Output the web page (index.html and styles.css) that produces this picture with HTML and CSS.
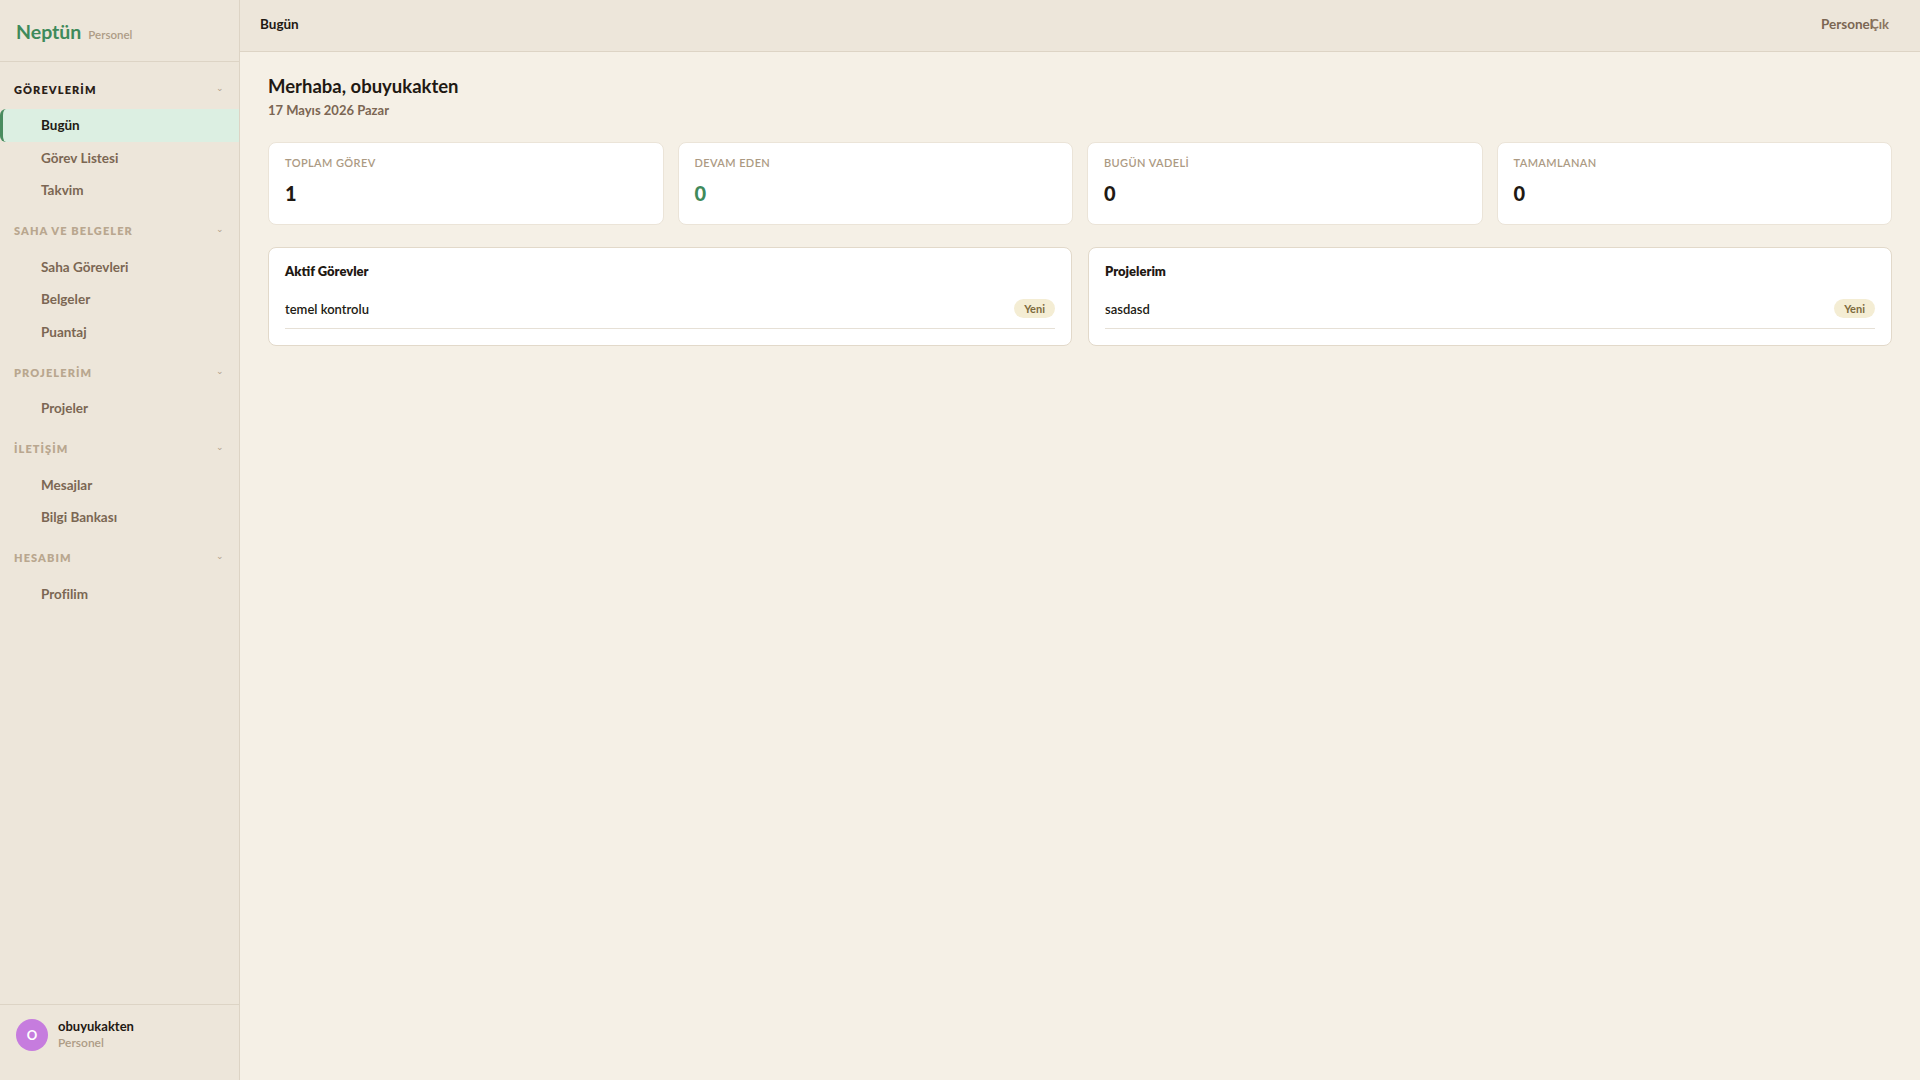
FILE: index.html
```html
<!DOCTYPE html>
<html lang="tr">
<head>
    <meta charset="utf-8">
    <title>Bugün - Neptün</title>
    <link rel="stylesheet" href="styles.css">
</head>
<body>
    <div class="layout">

        <aside class="sidebar">
            <div class="brand">
                <span class="brand-name">Neptün</span>
                <span class="brand-role">Personel</span>
            </div>

            <nav class="nav">
                <div class="nav-section">
                    <div class="nav-head open">GÖREVLERİM <span class="chev">&#8964;</span></div>
                    <a class="nav-item active" href="#">Bugün</a>
                    <a class="nav-item" href="#">Görev Listesi</a>
                    <a class="nav-item" href="#">Takvim</a>
                </div>
                <div class="nav-section">
                    <div class="nav-head">SAHA VE BELGELER <span class="chev">&#8964;</span></div>
                    <a class="nav-item" href="#">Saha Görevleri</a>
                    <a class="nav-item" href="#">Belgeler</a>
                    <a class="nav-item" href="#">Puantaj</a>
                </div>
                <div class="nav-section">
                    <div class="nav-head">PROJELERİM <span class="chev">&#8964;</span></div>
                    <a class="nav-item" href="#">Projeler</a>
                </div>
                <div class="nav-section">
                    <div class="nav-head">İLETİŞİM <span class="chev">&#8964;</span></div>
                    <a class="nav-item" href="#">Mesajlar</a>
                    <a class="nav-item" href="#">Bilgi Bankası</a>
                </div>
                <div class="nav-section">
                    <div class="nav-head">HESABIM <span class="chev">&#8964;</span></div>
                    <a class="nav-item" href="#">Profilim</a>
                </div>
            </nav>

            <div class="user">
                <div class="avatar">O</div>
                <div class="user-info">
                    <div class="user-name">obuyukakten</div>
                    <div class="user-role">Personel</div>
                </div>
            </div>
        </aside>

        <div class="main">
            <header class="topbar">
                <div class="page-title">Bugün</div>
                <div class="topbar-right">
                    <span class="top-role">Personel</span>
                    <button class="logout" type="button">Çık</button>
                </div>
            </header>

            <div class="content">
                <h1 class="greeting">Merhaba, obuyukakten</h1>
                <p class="date">17 Mayıs 2026 Pazar</p>

                <div class="stats">
                    <div class="stat">
                        <div class="stat-label">TOPLAM GÖREV</div>
                        <div class="stat-value">1</div>
                    </div>
                    <div class="stat">
                        <div class="stat-label">DEVAM EDEN</div>
                        <div class="stat-value green">0</div>
                    </div>
                    <div class="stat">
                        <div class="stat-label">BUGÜN VADELİ</div>
                        <div class="stat-value">0</div>
                    </div>
                    <div class="stat">
                        <div class="stat-label">TAMAMLANAN</div>
                        <div class="stat-value">0</div>
                    </div>
                </div>

                <div class="panels">
                    <div class="panel">
                        <h2>Aktif Görevler</h2>
                        <div class="row">
                            <span>temel kontrolu</span>
                            <span class="badge">Yeni</span>
                        </div>
                    </div>
                    <div class="panel">
                        <h2>Projelerim</h2>
                        <div class="row">
                            <span>sasdasd</span>
                            <span class="badge">Yeni</span>
                        </div>
                    </div>
                </div>
            </div>
        </div>

    </div>
</body>
</html>
```

FILE: styles.css
```css
* {
    box-sizing: border-box;
}

body {
    margin: 0;
    font-family: Lato, "Noto Sans", sans-serif;
    font-size: 13px;
    color: #221b14;
    background: #f5f0e6;
}

.layout {
    display: flex;
    height: 100vh;
}

/* sidebar */
.sidebar {
    width: 240px;
    flex-shrink: 0;
    display: flex;
    flex-direction: column;
    background: #ede6da;
    border-right: 1px solid #ddd4c5;
}

.brand {
    height: 62px;
    display: flex;
    align-items: baseline;
    gap: 7px;
    padding: 20px 16px 0;
    border-bottom: 1px solid #ddd4c5;
}

.brand-name {
    font-size: 19.5px;
    font-weight: 700;
    color: #3f8a5b;
}

.brand-role {
    font-size: 11.5px;
    font-weight: 600;
    color: #ad9c86;
}

.nav {
    flex: 1;
    padding-top: 13px;
}

.nav-section {
    margin-bottom: 10px;
}

.nav-head {
    height: 28px;
    display: flex;
    align-items: center;
    justify-content: space-between;
    padding: 0 14px 0 14px;
    margin-bottom: 6px;
    font-size: 11px;
    font-weight: 800;
    letter-spacing: 1.1px;
    color: #b9a78f;
}

.nav-head.open {
    color: #2a2018;
}

.chev {
    font-size: 9px;
    font-weight: 400;
    color: #b3a28b;
    line-height: 1;
    margin-top: -4px;
}

.nav-item {
    display: flex;
    align-items: center;
    height: 32.5px;
    padding-left: 41px;
    font-size: 13.5px;
    font-weight: 700;
    color: #7b6653;
    text-decoration: none;
}

.nav-item.active {
    padding-left: 38px;
    color: #221b14;
    background: #dcefe2;
    border-left: 3px solid #4a8c5f;
    border-radius: 6px 0 0 6px;
}

.user {
    display: flex;
    align-items: center;
    gap: 10px;
    height: 76px;
    padding: 0 16px 15px;
    border-top: 1px solid #ddd4c5;
}

.avatar {
    width: 32px;
    height: 32px;
    border-radius: 50%;
    background: #c67cde;
    color: #fff;
    font-size: 13px;
    font-weight: 700;
    display: flex;
    align-items: center;
    justify-content: center;
}

.user-info {
    margin-top: -3px;
}

.user-name {
    font-size: 13px;
    font-weight: 700;
    color: #1f1913;
}

.user-role {
    margin-top: 1px;
    font-size: 12px;
    font-weight: 600;
    color: #ad9c86;
}

/* main area */
.main {
    flex: 1;
    display: flex;
    flex-direction: column;
}

.topbar {
    height: 52px;
    display: flex;
    align-items: center;
    justify-content: space-between;
    padding: 0 28px 4px 20px;
    background: #ede6da;
    border-bottom: 1px solid #ddd4c5;
}

.page-title {
    font-size: 13.5px;
    font-weight: 700;
    color: #1f1913;
}

.topbar-right {
    display: flex;
    align-items: center;
}

.top-role {
    font-size: 13.5px;
    font-weight: 700;
    color: #7b6653;
}

.logout {
    margin-left: -6px;
    padding: 0 3px;
    border: none;
    background: transparent;
    font-family: inherit;
    font-size: 13px;
    font-weight: 700;
    color: #8a7560;
}

.content {
    padding: 23px 28px;
}

.greeting {
    margin: 0;
    font-size: 18.5px;
    font-weight: 700;
    color: #1f1913;
}

.date {
    margin: 5px 0 0;
    font-size: 13px;
    font-weight: 700;
    color: #7b6653;
}

.stats {
    display: grid;
    grid-template-columns: repeat(4, 1fr);
    gap: 14px;
    margin-top: 24px;
}

.stat {
    height: 83px;
    padding: 13px 16px 0;
    background: #fff;
    border: 1px solid #ebe4d8;
    border-radius: 8px;
}

.stat-label {
    font-size: 11px;
    font-weight: 600;
    letter-spacing: 0.4px;
    color: #ac9a83;
    line-height: 14px;
}

.stat-value {
    margin-top: 9px;
    font-size: 20px;
    font-weight: 900;
    line-height: 28px;
    color: #1f1913;
}

.stat-value.green {
    color: #3f8a5b;
}

.panels {
    display: grid;
    grid-template-columns: 1fr 1fr;
    gap: 16px;
    margin-top: 22px;
}

.panel {
    padding: 14px 16px 16px;
    background: #fff;
    border: 1px solid #e2d9ca;
    border-radius: 8px;
}

.panel h2 {
    margin: 0;
    font-size: 13px;
    font-weight: 800;
    line-height: 18px;
    color: #1f1913;
}

.row {
    display: flex;
    align-items: center;
    justify-content: space-between;
    margin-top: 10px;
    padding: 9px 0 10px;
    border-bottom: 1px solid #e6e0d6;
    font-size: 13px;
    font-weight: 600;
    color: #221b14;
}

.badge {
    padding: 2px 10px;
    border-radius: 10px;
    background: #f4edd4;
    font-size: 11px;
    font-weight: 700;
    line-height: 15px;
    color: #7d6a3d;
}
```
